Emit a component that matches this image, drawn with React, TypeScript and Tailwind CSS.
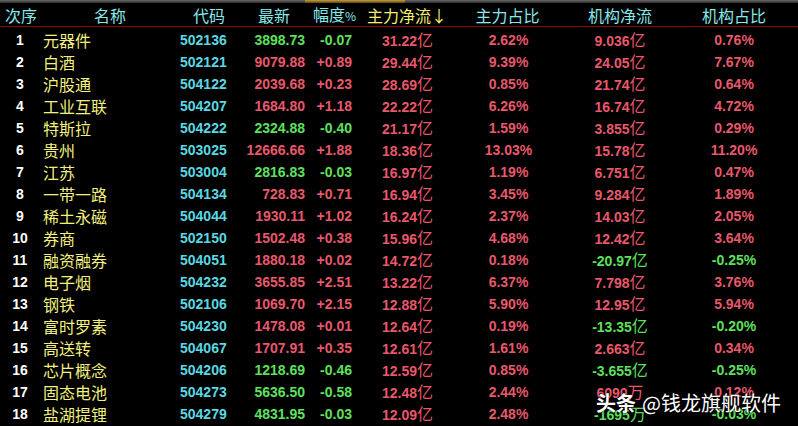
import React from "react";

type Row = {
  no: number;
  name: string;
  code: string;
  price: string;
  chg: string;
  main: string;
  mainPct: string;
  inst: string;
  instPct: string;
};

const ROWS: Row[] = [
  { no: 1, name: "元器件", code: "502136", price: "3898.73", chg: "-0.07", main: "31.22亿", mainPct: "2.62%", inst: "9.036亿", instPct: "0.76%" },
  { no: 2, name: "白酒", code: "502121", price: "9079.88", chg: "+0.89", main: "29.44亿", mainPct: "9.39%", inst: "24.05亿", instPct: "7.67%" },
  { no: 3, name: "沪股通", code: "504122", price: "2039.68", chg: "+0.23", main: "28.69亿", mainPct: "0.85%", inst: "21.74亿", instPct: "0.64%" },
  { no: 4, name: "工业互联", code: "504207", price: "1684.80", chg: "+1.18", main: "22.22亿", mainPct: "6.26%", inst: "16.74亿", instPct: "4.72%" },
  { no: 5, name: "特斯拉", code: "504222", price: "2324.88", chg: "-0.40", main: "21.17亿", mainPct: "1.59%", inst: "3.855亿", instPct: "0.29%" },
  { no: 6, name: "贵州", code: "503025", price: "12666.66", chg: "+1.88", main: "18.36亿", mainPct: "13.03%", inst: "15.78亿", instPct: "11.20%" },
  { no: 7, name: "江苏", code: "503004", price: "2816.83", chg: "-0.03", main: "16.97亿", mainPct: "1.19%", inst: "6.751亿", instPct: "0.47%" },
  { no: 8, name: "一带一路", code: "504134", price: "728.83", chg: "+0.71", main: "16.94亿", mainPct: "3.45%", inst: "9.284亿", instPct: "1.89%" },
  { no: 9, name: "稀土永磁", code: "504044", price: "1930.11", chg: "+1.02", main: "16.24亿", mainPct: "2.37%", inst: "14.03亿", instPct: "2.05%" },
  { no: 10, name: "券商", code: "502150", price: "1502.48", chg: "+0.38", main: "15.96亿", mainPct: "4.68%", inst: "12.42亿", instPct: "3.64%" },
  { no: 11, name: "融资融券", code: "504051", price: "1880.18", chg: "+0.02", main: "14.72亿", mainPct: "0.18%", inst: "-20.97亿", instPct: "-0.25%" },
  { no: 12, name: "电子烟", code: "504232", price: "3655.85", chg: "+2.51", main: "13.22亿", mainPct: "6.37%", inst: "7.798亿", instPct: "3.76%" },
  { no: 13, name: "钢铁", code: "502106", price: "1069.70", chg: "+2.15", main: "12.88亿", mainPct: "5.90%", inst: "12.95亿", instPct: "5.94%" },
  { no: 14, name: "富时罗素", code: "504230", price: "1478.08", chg: "+0.01", main: "12.64亿", mainPct: "0.19%", inst: "-13.35亿", instPct: "-0.20%" },
  { no: 15, name: "高送转", code: "504067", price: "1707.91", chg: "+0.35", main: "12.61亿", mainPct: "1.61%", inst: "2.663亿", instPct: "0.34%" },
  { no: 16, name: "芯片概念", code: "504206", price: "1218.69", chg: "-0.46", main: "12.59亿", mainPct: "0.85%", inst: "-3.655亿", instPct: "-0.25%" },
  { no: 17, name: "固态电池", code: "504273", price: "5636.50", chg: "-0.58", main: "12.48亿", mainPct: "2.44%", inst: "6090万", instPct: "0.12%" },
  { no: 18, name: "盐湖提锂", code: "504279", price: "4831.95", chg: "-0.03", main: "12.09亿", mainPct: "2.48%", inst: "-1695万", instPct: "-0.03%" },
];

const RED = "text-[#e8586a]";
const GREEN = "text-[#5ee05e]";

const cols = "grid grid-cols-[40px_140px_50px_80px_50px_95px_105px_120px_108px]";
const cjk = "font-['Noto_Sans_CJK_SC',sans-serif]";
const num = "font-['Liberation_Sans',Arial,sans-serif] font-bold text-[14px]";

// splits "31.22亿" into digits + unit so the unit gets the CJK face
function Amount({ v }: { v: string }) {
  const unit = v.slice(-1);
  const digits = v.slice(0, -1);
  return (
    <span>
      <span className={num}>{digits}</span>
      <span className={`${cjk} text-[16px] font-normal`}>{unit}</span>
    </span>
  );
}

export default function App() {
  return (
    <div className="relative h-[426px] w-[798px] overflow-hidden bg-black">
      <div className="flex h-[3px]">
        <div className="w-[305px] bg-gradient-to-b from-[#6a6a6a] to-[#2a2a2a]" />
        <div className="w-[100px] bg-gradient-to-b from-[#c9a040] to-[#5a4410]" />
        <div className="flex-1 bg-gradient-to-b from-[#6a6a6a] to-[#2a2a2a]" />
      </div>

      <div className={`${cols} ${cjk} h-[23px] items-center text-[16px] leading-[23px] text-[#86e8e8]`}>
        <div className="pl-[5px]">次序</div>
        <div className="text-center">名称</div>
        <div className="pr-[5px] text-right">代码</div>
        <div className="pr-[20px] text-right">最新</div>
        <div className="pr-[4px] text-right">
          幅度<span className="text-[12px]">%</span>
        </div>
        <div className="pl-[7px] text-[#f0f070]">主力净流↓</div>
        <div className="text-center">主力占比</div>
        <div className="text-center">机构净流</div>
        <div className="text-center">机构占比</div>
      </div>

      <div className="h-px bg-[#8a0a0a]" />

      <div className="mt-px">
        {ROWS.map((r) => {
          const up = r.chg.startsWith("+");
          const chgColor = up ? RED : GREEN;
          const instColor = r.inst.startsWith("-") ? GREEN : RED;
          return (
            <div key={r.no} className={`${cols} h-[22px] items-center leading-[22px]`}>
              <div className={`${num} text-center text-white`}>{r.no}</div>
              <div className={`${cjk} pl-[3px] text-[16px] text-[#f2f07e]`}>{r.name}</div>
              <div className={`${num} pr-[4px] text-right text-[#5ad8e2]`}>{r.code}</div>
              <div className={`${num} pr-[5px] text-right ${chgColor}`}>{r.price}</div>
              <div className={`${num} pr-[8px] text-right ${chgColor}`}>{r.chg}</div>
              <div className={`pr-[22px] text-right ${RED}`}>
                <Amount v={r.main} />
              </div>
              <div className={`${num} pl-[2px] text-center ${RED}`}>{r.mainPct}</div>
              <div className={`text-center ${instColor}`}>
                <Amount v={r.inst} />
              </div>
              <div className={`${num} text-center ${instColor}`}>{r.instPct}</div>
            </div>
          );
        })}
      </div>

      {/* watermark */}
      <div
        className={`${cjk} absolute left-[596px] top-[390px] text-[20px] leading-[26px] text-white [text-shadow:0_0_3px_rgba(0,0,0,0.9)]`}
      >
        <span className="font-bold">头条</span>
        <span className="ml-[6px]">@钱龙旗舰软件</span>
      </div>
    </div>
  );
}
